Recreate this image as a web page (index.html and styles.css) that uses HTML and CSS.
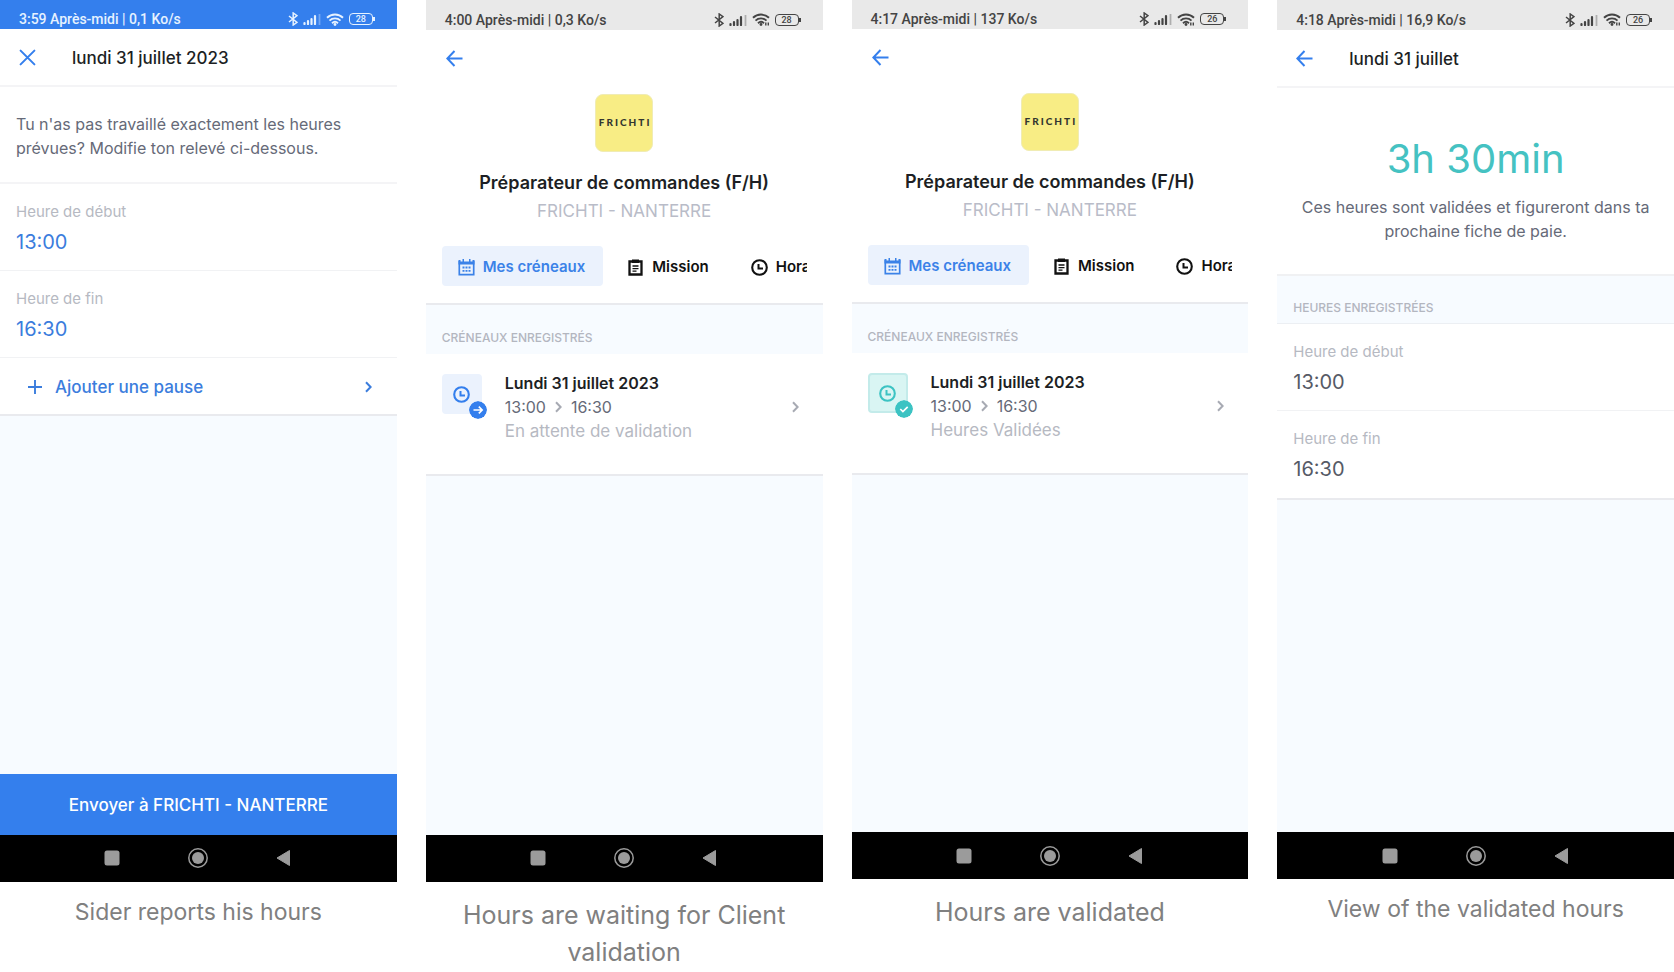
FILE: index.html
```
<!DOCTYPE html>
<html lang="fr">
<head>
    <meta charset="UTF-8">
    <meta name="viewport" content="width=device-width, initial-scale=1.0">
    <title>Side - Relevé d'heures</title>
    <link rel="stylesheet" href="styles.css">
</head>
<body>
    <!-- icons -->
    <svg class="sprite" aria-hidden="true">
        <symbol id="bluetooth" viewBox="0 0 10 14">
            <path d="M1 4l8 6.300L5.200 13V1L9 3.700 1 10" fill="none" stroke="currentColor" stroke-width="1.500"/>
        </symbol>
        <symbol id="signal" viewBox="0 0 18 12">
            <path d="M1.500 10v1M5 8v3M8.500 6v5M12 3v8" stroke="currentColor" stroke-width="2.200" stroke-linecap="round"/>
            <path d="M16.500 1v11" stroke="currentColor" stroke-width="1.800" opacity=".35"/>
        </symbol>
        <symbol id="wifi" viewBox="0 0 18 13">
            <path d="M1 4.800a11.500 11.500 0 0 1 16 0M3.500 7.600a8 8 0 0 1 11 0M6 10.200a4.500 4.500 0 0 1 6 0" fill="none" stroke="currentColor" stroke-width="1.900"/>
            <circle cx="9" cy="11.500" r="1.400" fill="currentColor"/>
        </symbol>
        <symbol id="wifi-data" viewBox="0 0 18 13">
            <path d="M1 4.800a11.500 11.500 0 0 1 16 0M3.500 7.600a8 8 0 0 1 11 0M6 10.200a4.500 4.500 0 0 1 6 0" fill="none" stroke="currentColor" stroke-width="1.900"/>
            <circle cx="9" cy="11.500" r="1.400" fill="currentColor"/>
            <path d="M13.800 9.500v3M16.300 9.500v3" stroke="currentColor" stroke-width="1.400"/>
        </symbol>
        <symbol id="close" viewBox="0 0 16 16">
            <path d="M1.500 1.500l13 13M14.500 1.500l-13 13" stroke="currentColor" stroke-width="1.900" stroke-linecap="round"/>
        </symbol>
        <symbol id="back" viewBox="0 0 17 17">
            <path d="M16.500 8.500H1.500M8.500 1L1.300 8.500l7.200 7.500" fill="none" stroke="currentColor" stroke-width="2"/>
        </symbol>
        <symbol id="plus" viewBox="0 0 16 16">
            <path d="M8 1v14M1 8h14" stroke="currentColor" stroke-width="1.900"/>
        </symbol>
        <symbol id="chevron" viewBox="0 0 7 12">
            <path d="M1 1.300L5.600 6 1 10.700" fill="none" stroke="currentColor" stroke-width="2"/>
        </symbol>
        <symbol id="calendar" viewBox="0 0 17 17">
            <path d="M1.300 2v13.700h14.400V2" fill="none" stroke="currentColor" stroke-width="1.700"/>
            <path d="M.5 1h2v1.500h2V0h1.500v2.500h5V0h1.500v2.500h2V1h2v4.500H.5z" fill="currentColor"/>
            <path d="M4.500 8.500h2M7.500 8.500h2M10.500 8.500h2M4.500 11.800h2M7.500 11.800h2M10.500 11.800h2" stroke="currentColor" stroke-width="1.800"/>
        </symbol>
        <symbol id="clipboard" viewBox="0 0 17 17">
            <path d="M2.500 2.500h12v13h-12z" fill="none" stroke="currentColor" stroke-width="2.300"/>
            <path d="M5 .5h7V4H5zM5.500 6.300h6v1.400h-6zM5.500 8.900h6v1.400h-6zM5.500 11.400h4v1.400h-4z" fill="currentColor"/>
        </symbol>
        <symbol id="clock" viewBox="0 0 17 17">
            <circle cx="8.500" cy="8.500" r="7.300" fill="none" stroke="currentColor" stroke-width="2.100"/>
            <path d="M7.500 5v4.500h4.500" fill="none" stroke="currentColor" stroke-width="2"/>
        </symbol>
        <symbol id="sent" viewBox="0 0 18 18">
            <circle cx="9" cy="9" r="9" fill="currentColor"/>
            <path d="M4.500 9h8.500M9.800 5.600L13.200 9l-3.400 3.400" fill="none" stroke="#fff" stroke-width="1.600"/>
        </symbol>
        <symbol id="check" viewBox="0 0 18 18">
            <circle cx="9" cy="9" r="9" fill="currentColor"/>
            <path d="M5.300 9l2.600 2.500 4.800-4.600" fill="none" stroke="#fff" stroke-width="1.700"/>
        </symbol>
        <symbol id="recent" viewBox="0 0 20 20">
            <rect x="2.500" y="2.500" width="15" height="15" rx="2.500" fill="currentColor"/>
        </symbol>
        <symbol id="home" viewBox="0 0 20 20">
            <circle cx="10" cy="10" r="9.200" fill="none" stroke="currentColor" stroke-width="1.500"/>
            <circle cx="10" cy="10" r="6" fill="currentColor"/>
        </symbol>
        <symbol id="return" viewBox="0 0 20 20">
            <path d="M3 10L15.500 2.500v15z" fill="currentColor" stroke="currentColor" stroke-width="1" stroke-linejoin="round"/>
        </symbol>
    </svg>

    <main class="screens">
        <!-- saisie des heures -->
        <figure class="screen">
            <div class="phone">
                <div class="status status-blue">
                    <span>3:59 Après-midi | 0,1 Ko/s</span>
                    <div class="status-icons">
                        <svg class="bluetooth"><use href="#bluetooth"/></svg>
                        <svg class="signal"><use href="#signal"/></svg>
                        <svg class="wifi"><use href="#wifi"/></svg>
                        <span class="battery">28</span>
                    </div>
                </div>
                <header class="header">
                    <button class="icon-btn" aria-label="Fermer"><svg><use href="#close"/></svg></button>
                    <h1>lundi 31 juillet 2023</h1>
                </header>
                <p class="intro">Tu n'as pas travaillé exactement les heures prévues? Modifie ton relevé ci-dessous.</p>
                <form class="form" id="hours">
                    <div class="field">
                        <label for="start">Heure de début</label>
                        <input type="text" id="start" value="13:00">
                    </div>
                    <div class="field">
                        <label for="end">Heure de fin</label>
                        <input type="text" id="end" value="16:30">
                    </div>
                    <button type="button" class="add">
                        <svg class="plus"><use href="#plus"/></svg>
                        <span>Ajouter une pause</span>
                        <svg class="chevron"><use href="#chevron"/></svg>
                    </button>
                </form>
                <button class="send" form="hours">Envoyer à FRICHTI - NANTERRE</button>
                <div class="navbar">
                    <svg><use href="#recent"/></svg>
                    <svg><use href="#home"/></svg>
                    <svg><use href="#return"/></svg>
                </div>
            </div>
            <figcaption>Sider reports his hours</figcaption>
        </figure>

        <!-- en attente -->
        <figure class="screen">
            <div class="phone">
                <div class="status status-tall">
                    <span>4:00 Après-midi | 0,3 Ko/s</span>
                    <div class="status-icons">
                        <svg class="bluetooth"><use href="#bluetooth"/></svg>
                        <svg class="signal"><use href="#signal"/></svg>
                        <svg class="wifi"><use href="#wifi-data"/></svg>
                        <span class="battery">28</span>
                    </div>
                </div>
                <div class="mission">
                    <button class="icon-btn" aria-label="Retour"><svg><use href="#back"/></svg></button>
                    <div class="logo">FRICHTI</div>
                    <h1>Préparateur de commandes (F/H)</h1>
                    <p>FRICHTI - NANTERRE</p>
                    <nav class="tabs">
                        <button class="active"><svg><use href="#calendar"/></svg>Mes créneaux</button>
                        <button><svg><use href="#clipboard"/></svg>Mission</button>
                        <button><svg><use href="#clock"/></svg>Horaires</button>
                    </nav>
                </div>
                <h2 class="section">CRÉNEAUX ENREGISTRÉS</h2>
                <a class="slot" href="#">
                    <div class="slot-icon">
                        <svg class="clock"><use href="#clock"/></svg>
                        <svg class="badge"><use href="#sent"/></svg>
                    </div>
                    <div class="slot-text">
                        <strong>Lundi 31 juillet 2023</strong>
                        <span class="times">13:00 <svg class="chevron"><use href="#chevron"/></svg> 16:30</span>
                        <span class="state">En attente de validation</span>
                    </div>
                    <svg class="chevron"><use href="#chevron"/></svg>
                </a>
                <div class="navbar">
                    <svg><use href="#recent"/></svg>
                    <svg><use href="#home"/></svg>
                    <svg><use href="#return"/></svg>
                </div>
            </div>
            <figcaption class="large">Hours are waiting for Client validation</figcaption>
        </figure>

        <!-- validées -->
        <figure class="screen">
            <div class="phone phone-short">
                <div class="status">
                    <span>4:17 Après-midi | 137 Ko/s</span>
                    <div class="status-icons">
                        <svg class="bluetooth"><use href="#bluetooth"/></svg>
                        <svg class="signal"><use href="#signal"/></svg>
                        <svg class="wifi"><use href="#wifi-data"/></svg>
                        <span class="battery">26</span>
                    </div>
                </div>
                <div class="mission">
                    <button class="icon-btn" aria-label="Retour"><svg><use href="#back"/></svg></button>
                    <div class="logo">FRICHTI</div>
                    <h1>Préparateur de commandes (F/H)</h1>
                    <p>FRICHTI - NANTERRE</p>
                    <nav class="tabs">
                        <button class="active"><svg><use href="#calendar"/></svg>Mes créneaux</button>
                        <button><svg><use href="#clipboard"/></svg>Mission</button>
                        <button><svg><use href="#clock"/></svg>Horaires</button>
                    </nav>
                </div>
                <h2 class="section">CRÉNEAUX ENREGISTRÉS</h2>
                <a class="slot" href="#">
                    <div class="slot-icon slot-valid">
                        <svg class="clock"><use href="#clock"/></svg>
                        <svg class="badge"><use href="#check"/></svg>
                    </div>
                    <div class="slot-text">
                        <strong>Lundi 31 juillet 2023</strong>
                        <span class="times">13:00 <svg class="chevron"><use href="#chevron"/></svg> 16:30</span>
                        <span class="state">Heures Validées</span>
                    </div>
                    <svg class="chevron"><use href="#chevron"/></svg>
                </a>
                <div class="navbar">
                    <svg><use href="#recent"/></svg>
                    <svg><use href="#home"/></svg>
                    <svg><use href="#return"/></svg>
                </div>
            </div>
            <figcaption class="large">Hours are validated</figcaption>
        </figure>

        <!-- détail des heures validées -->
        <figure class="screen">
            <div class="phone phone-short">
                <div class="status status-tall">
                    <span>4:18 Après-midi | 16,9 Ko/s</span>
                    <div class="status-icons">
                        <svg class="bluetooth"><use href="#bluetooth"/></svg>
                        <svg class="signal"><use href="#signal"/></svg>
                        <svg class="wifi"><use href="#wifi-data"/></svg>
                        <span class="battery">26</span>
                    </div>
                </div>
                <header class="header">
                    <button class="icon-btn" aria-label="Retour"><svg><use href="#back"/></svg></button>
                    <h1>lundi 31 juillet</h1>
                </header>
                <div class="total">
                    <strong>3h 30min</strong>
                    <p>Ces heures sont validées et figureront dans ta prochaine fiche de paie.</p>
                </div>
                <h2 class="section section-line">HEURES ENREGISTRÉES</h2>
                <dl class="form">
                    <div class="field">
                        <dt>Heure de début</dt>
                        <dd>13:00</dd>
                    </div>
                    <div class="field">
                        <dt>Heure de fin</dt>
                        <dd>16:30</dd>
                    </div>
                </dl>
                <div class="navbar">
                    <svg><use href="#recent"/></svg>
                    <svg><use href="#home"/></svg>
                    <svg><use href="#return"/></svg>
                </div>
            </div>
            <figcaption>View of the validated hours</figcaption>
        </figure>
    </main>
</body>
</html>
```
FILE: styles.css
```
* {
    box-sizing: border-box;
}
body, figure, h1, h2, p, dl, dd {
    margin: 0;
}
body {
    background: #fff;
    font-family: Inter, "Liberation Sans", sans-serif;
    font-size: 16px;
    line-height: 24px;
    color: #1d1f24;
}
button, input {
    padding: 0;
    border: 0;
    background: none;
    font: inherit;
    color: inherit;
}
button {
    cursor: pointer;
}
svg {
    display: block;
    flex: none;
}
.sprite {
    display: none;
}
.screens {
    display: grid;
    grid-template-columns: repeat(4, minmax(0, 1fr));
    column-gap: 29px;
}
.phone {
    display: flex;
    flex-direction: column;
    aspect-ratio: 9 / 20;
    background: #f7fbff;
}
.phone-short {
    aspect-ratio: 397 / 880;
}
figcaption {
    padding: 12px 24px 0;
    font-size: 23px;
    line-height: 37px;
    text-align: center;
    color: #808080;
}
figcaption.large {
    padding-top: 15px;
    font-size: 25px;
}

/* status bar */
.status {
    display: flex;
    align-items: center;
    justify-content: space-between;
    height: 29px;
    padding: 9px 22px 0 19px;
    background: #e9e9e9;
    font-family: Roboto, sans-serif;
    font-size: 14px;
    font-weight: 500;
    line-height: 20px;
    color: #444;
}
.status-tall {
    height: 30px;
}
.status-blue {
    background: #347fed;
    color: #e6f2ff;
}
.status-icons {
    display: flex;
    align-items: center;
    gap: 5px;
}
.bluetooth {
    width: 10px;
    height: 14px;
}
.signal {
    width: 18px;
    height: 12px;
}
.wifi {
    width: 18px;
    height: 13px;
}
.battery {
    position: relative;
    width: 24px;
    height: 12px;
    margin-right: 2px;
    border: 1px solid;
    border-radius: 4px;
    font-size: 9px;
    line-height: 10px;
    text-align: center;
}
.battery::after {
    content: "";
    position: absolute;
    top: 3px;
    right: -3px;
    width: 2px;
    height: 4px;
    background: currentColor;
}

/* header */
.header {
    display: flex;
    align-items: center;
    gap: 36px;
    height: 58px;
    padding-left: 19px;
    border-bottom: 2px solid #f4f4f6;
    background: #fff;
}
.header h1 {
    padding-top: 2px;
    font-size: 17px;
    font-weight: 500;
}
.icon-btn {
    color: #347fed;
}
.icon-btn svg {
    width: 17px;
    height: 17px;
}
.intro {
    padding: 25px 16px 22px;
    border-bottom: 2px solid #f4f4f6;
    background: #fff;
    color: #666a78;
}

/* form */
.form {
    border-bottom: 2px solid #e9eaee;
    background: #fff;
}
.field {
    height: 87px;
    padding: 16px 16px 0;
    border-bottom: 1px solid #f1f2f4;
}
.field label, .field dt {
    display: block;
    font-size: 15px;
    color: #b6b9c2;
}
.field input, .field dd {
    display: block;
    width: 100%;
    height: 36px;
    font-size: 20px;
    line-height: 36px;
    color: #565a66;
}
.field input {
    color: #3b7ddd;
}
dl .field:last-child {
    border-bottom: 0;
}
.add {
    display: flex;
    align-items: center;
    gap: 12px;
    width: 100%;
    height: 56px;
    padding: 2px 25px 0 27px;
    font-size: 17px;
    font-weight: 500;
    color: #3b7ddd;
}
.plus {
    width: 16px;
    height: 16px;
}
.chevron {
    width: 7px;
    height: 12px;
}
.add .chevron {
    margin-left: auto;
}
.send {
    height: 61px;
    margin-top: auto;
    padding-top: 2px;
    background: #347fed;
    font-size: 17px;
    font-weight: 500;
    color: #fff;
}

/* mission */
.mission {
    display: flex;
    flex-direction: column;
    align-items: center;
    padding: 20px 16px 17px;
    border-bottom: 2px solid #e9eaee;
    background: #fff;
}
.mission .icon-btn {
    align-self: flex-start;
    margin-left: 4px;
}
.logo {
    width: 58px;
    height: 58px;
    margin-top: 27px;
    padding-left: 2px;
    border: 1px solid #f0ecb4;
    border-radius: 8px;
    background: #f8ed85;
    font-family: Lato, sans-serif;
    font-size: 10px;
    font-weight: 900;
    letter-spacing: 2px;
    line-height: 54px;
    text-align: center;
    color: #33372f;
}
.mission h1 {
    margin-top: 19px;
    font-size: 18px;
    font-weight: 600;
}
.mission p {
    margin-top: 4px;
    font-size: 17px;
    color: #b9bcc8;
}
.tabs {
    display: flex;
    gap: 8px;
    width: 100%;
    margin-top: 23px;
    overflow: hidden;
}
.tabs button {
    display: flex;
    flex: none;
    align-items: center;
    gap: 8px;
    height: 40px;
    padding: 2px 18px 0 16px;
    border-radius: 4px;
    font-size: 15px;
    font-weight: 600;
    color: #111;
}
.tabs .active {
    background: #ebf2fd;
    color: #3b82e8;
}
.tabs svg, .clock {
    width: 17px;
    height: 17px;
}
.section {
    padding: 21px 16px 4px;
    font-size: 12px;
    font-weight: 500;
    color: #b3b6bf;
}
.section-line {
    padding: 20px 16px 3px;
    border-bottom: 1px solid #eceff3;
}

/* slot */
.slot {
    display: flex;
    align-items: flex-start;
    padding: 17px 24px 31px 16px;
    border-bottom: 2px solid #e9eaee;
    background: #fff;
    color: inherit;
    text-decoration: none;
}
.slot-icon {
    position: relative;
    display: flex;
    align-items: center;
    justify-content: center;
    width: 40px;
    height: 40px;
    margin-top: 3px;
    border-radius: 4px;
    background: #ebf2fd;
    color: #347fed;
}
.slot-valid {
    border: 2px solid #c3ebea;
    background: #d9f5f3;
    color: #3cc3c3;
}
.badge {
    position: absolute;
    right: -5px;
    bottom: -5px;
    width: 18px;
    height: 18px;
    border-radius: 50%;
}
.slot-valid .badge {
    right: -7px;
    bottom: -7px;
}
.slot-text {
    display: flex;
    flex: 1;
    flex-direction: column;
    margin-left: 23px;
}
.slot-text strong {
    font-weight: 600;
}
.times {
    display: flex;
    align-items: center;
    gap: 9px;
    color: #666a78;
}
.slot .chevron {
    color: #a7aab3;
}
.slot > .chevron {
    align-self: center;
}
.state {
    font-size: 17px;
    color: #b6b9c2;
}

/* total */
.total {
    padding: 47px 16px 31px;
    border-bottom: 2px solid #f0f1f3;
    background: #fff;
    text-align: center;
    color: #666a78;
}
.total strong {
    display: block;
    margin-bottom: 12px;
    font-size: 40px;
    font-weight: 400;
    line-height: 48px;
    color: #45c2c2;
}

/* android buttons */
.navbar {
    display: flex;
    align-items: center;
    justify-content: center;
    gap: 66px;
    height: 47px;
    margin-top: auto;
    background: #000;
    color: #9b9b9b;
}
.send + .navbar {
    margin-top: 0;
}
.navbar svg {
    width: 20px;
    height: 20px;
}
```
